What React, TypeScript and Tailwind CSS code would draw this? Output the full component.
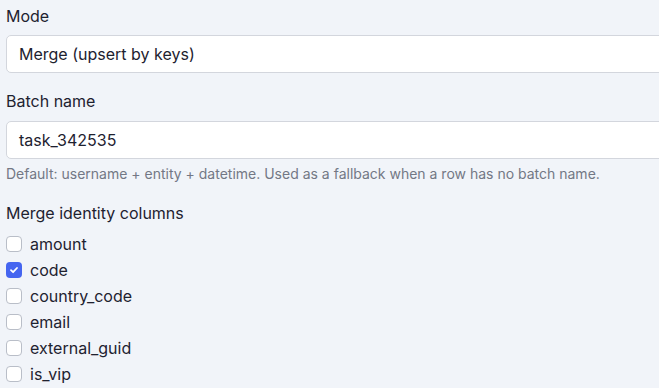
import React from 'react'

const columns = [
  { name: 'amount', checked: false },
  { name: 'code', checked: true },
  { name: 'country_code', checked: false },
  { name: 'email', checked: false },
  { name: 'external_guid', checked: false },
  { name: 'is_vip', checked: false },
]

function Checkbox({ checked }: { checked: boolean }) {
  if (checked) {
    return (
      <span className="flex h-[16px] w-[16px] items-center justify-center rounded-[4px] bg-[#4565f0]">
        <svg width="10" height="10" viewBox="0 0 10 10" fill="none">
          <path d="M2 5.2 L4.1 7.2 L8 3" stroke="white" strokeWidth="1.8" strokeLinecap="round" strokeLinejoin="round" />
        </svg>
      </span>
    )
  }
  return <span className="h-[16px] w-[16px] rounded-[4px] border border-[#b9bec8] bg-white" />
}

export default function App() {
  return (
    <div
      className="h-[388px] w-[659px] overflow-hidden bg-[#f1f4f9] pl-[6px] text-[#1e2230]"
      style={{ fontFamily: 'Inter, "Noto Sans", sans-serif' }}
    >
      <div className="pt-[6px] text-[16px] leading-[20px]">Mode</div>
      <div className="mt-[9px] flex h-[38px] w-[720px] items-center rounded-[5px] border border-[#d3d6dd] bg-white px-[12px] text-[16px]">
        Merge (upsert by keys)
      </div>

      <div className="mt-[18px] text-[16px] leading-[20px]">Batch name</div>
      <div className="mt-[10px] flex h-[38px] w-[720px] items-center rounded-[5px] border border-[#d3d6dd] bg-white px-[12px] text-[16px]">
        task_342535
      </div>
      <div className="mt-[6px] text-[14px] leading-[18px] text-[#737885]">
        Default: username + entity + datetime. Used as a fallback when a row has no batch name.
      </div>

      <div className="mt-[20px] text-[16px] leading-[20px]">Merge identity columns</div>
      <div className="mt-[8px] flex flex-col">
        {columns.map((c) => (
          <label key={c.name} className="flex h-[26px] items-center gap-[8px] text-[16px]">
            <Checkbox checked={c.checked} />
            <span>{c.name}</span>
          </label>
        ))}
      </div>
    </div>
  )
}
